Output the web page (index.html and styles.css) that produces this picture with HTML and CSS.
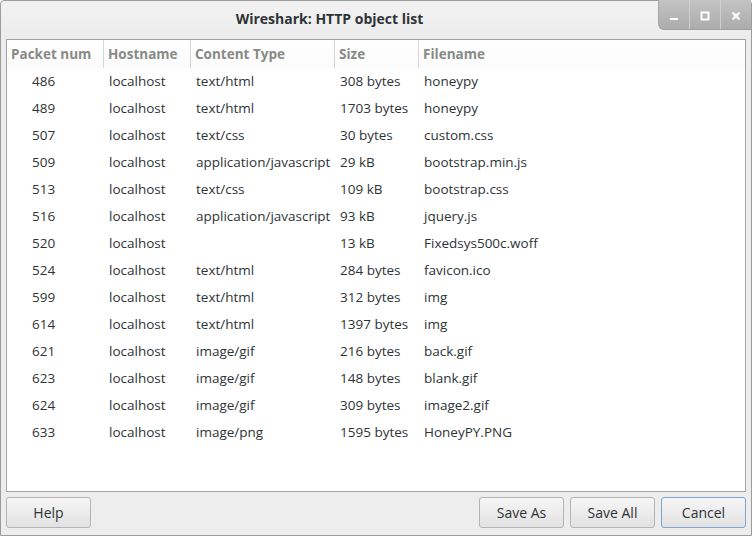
FILE: index.html
```html
<!DOCTYPE html>
<html>
<head>
<meta charset="utf-8">
<link rel="stylesheet" href="styles.css">
</head>
<body>
<div class="window">
  <div class="titlebar">
    <div class="title">Wireshark: HTTP object list</div>
    <div class="wm-buttons">
      <div class="wm-btn"><svg width="10" height="10" viewBox="0 0 10 10"><rect x="1" y="7" width="8" height="2" fill="#fff"/></svg></div>
      <div class="wm-btn"><svg width="10" height="10" viewBox="0 0 10 10"><rect x="1.5" y="1.5" width="7" height="7" fill="none" stroke="#fff" stroke-width="2"/></svg></div>
      <div class="wm-btn"><svg width="10" height="10" viewBox="0 0 10 10"><path d="M1.5 1.5 L8.5 8.5 M8.5 1.5 L1.5 8.5" stroke="#fff" stroke-width="2.2"/></svg></div>
    </div>
  </div>
  <div class="content">
    <div class="tree">
      <div class="row header">
        <div class="c c1">Packet num</div>
        <div class="c c2">Hostname</div>
        <div class="c c3">Content Type</div>
        <div class="c c4">Size</div>
        <div class="c c5">Filename</div>
      </div>
      <div class="row"><div class="c c1 num">486</div><div class="c c2">localhost</div><div class="c c3">text/html</div><div class="c c4">308 bytes</div><div class="c c5">honeypy</div></div>
      <div class="row"><div class="c c1 num">489</div><div class="c c2">localhost</div><div class="c c3">text/html</div><div class="c c4">1703 bytes</div><div class="c c5">honeypy</div></div>
      <div class="row"><div class="c c1 num">507</div><div class="c c2">localhost</div><div class="c c3">text/css</div><div class="c c4">30 bytes</div><div class="c c5">custom.css</div></div>
      <div class="row"><div class="c c1 num">509</div><div class="c c2">localhost</div><div class="c c3">application/javascript</div><div class="c c4">29 kB</div><div class="c c5">bootstrap.min.js</div></div>
      <div class="row"><div class="c c1 num">513</div><div class="c c2">localhost</div><div class="c c3">text/css</div><div class="c c4">109 kB</div><div class="c c5">bootstrap.css</div></div>
      <div class="row"><div class="c c1 num">516</div><div class="c c2">localhost</div><div class="c c3">application/javascript</div><div class="c c4">93 kB</div><div class="c c5">jquery.js</div></div>
      <div class="row"><div class="c c1 num">520</div><div class="c c2">localhost</div><div class="c c3"></div><div class="c c4">13 kB</div><div class="c c5">Fixedsys500c.woff</div></div>
      <div class="row"><div class="c c1 num">524</div><div class="c c2">localhost</div><div class="c c3">text/html</div><div class="c c4">284 bytes</div><div class="c c5">favicon.ico</div></div>
      <div class="row"><div class="c c1 num">599</div><div class="c c2">localhost</div><div class="c c3">text/html</div><div class="c c4">312 bytes</div><div class="c c5">img</div></div>
      <div class="row"><div class="c c1 num">614</div><div class="c c2">localhost</div><div class="c c3">text/html</div><div class="c c4">1397 bytes</div><div class="c c5">img</div></div>
      <div class="row"><div class="c c1 num">621</div><div class="c c2">localhost</div><div class="c c3">image/gif</div><div class="c c4">216 bytes</div><div class="c c5">back.gif</div></div>
      <div class="row"><div class="c c1 num">623</div><div class="c c2">localhost</div><div class="c c3">image/gif</div><div class="c c4">148 bytes</div><div class="c c5">blank.gif</div></div>
      <div class="row"><div class="c c1 num">624</div><div class="c c2">localhost</div><div class="c c3">image/gif</div><div class="c c4">309 bytes</div><div class="c c5">image2.gif</div></div>
      <div class="row"><div class="c c1 num">633</div><div class="c c2">localhost</div><div class="c c3">image/png</div><div class="c c4">1595 bytes</div><div class="c c5">HoneyPY.PNG</div></div>
    </div>
    <div class="buttons">
      <div class="btn">Help</div>
      <div class="spacer"></div>
      <div class="btn">Save As</div>
      <div class="btn">Save All</div>
      <div class="btn focus">Cancel</div>
    </div>
  </div>
</div>
</body>
</html>
```
FILE: styles.css
```css
html, body {
  margin: 0;
  padding: 0;
}
body {
  width: 752px;
  height: 536px;
  overflow: hidden;
  font-family: "Open Sans", "DejaVu Sans", sans-serif;
  font-size: 13.5px;
  color: #2e3436;
}
.window {
  width: 752px;
  height: 536px;
  box-sizing: border-box;
  border: 1px solid #9c9c9c;
  border-radius: 4px 4px 0 0;
  background: #ededed;
  display: flex;
  flex-direction: column;
}
.titlebar {
  height: 33px;
  display: flex;
  align-items: flex-start;
  background: linear-gradient(#f2f2f2, #ededed);
  border-radius: 4px 4px 0 0;
}
.title {
  flex: 1;
  height: 33px;
  line-height: 35px;
  text-align: center;
  font-weight: bold;
  font-size: 14px;
  color: #2e3436;
}
.wm-buttons {
  display: flex;
  height: 30px;
  margin-top: -1px;
  background: linear-gradient(#c4c4c4, #acacac);
  border-radius: 0 0 0 6px;
  border-left: 1px solid #a8a8a8;
  border-bottom: 1px solid #a0a0a0;
  box-sizing: border-box;
}
.wm-btn {
  width: 30px;
  display: flex;
  align-items: center;
  justify-content: center;
  padding-top: 2px;
}
.wm-btn + .wm-btn {
  border-left: 1px solid #cfcfcf;
}
.content {
  flex: 1;
  display: flex;
  flex-direction: column;
  padding: 5px 5px 7px 5px;
  gap: 5px;
}
.tree {
  height: 453px;
  box-sizing: border-box;
  border: 1px solid #a3a3a3;
  background: #fff;
  padding-top: 1px;
}
.row {
  display: flex;
  height: 27px;
  line-height: 27px;
  white-space: nowrap;
}
.c {
  box-sizing: border-box;
  padding-left: 5px;
  overflow: hidden;
}
.c1 { width: 97px; padding-left: 4px; }
.c2 { width: 87px; }
.c3 { width: 144px; }
.c4 { width: 84px; }
.c5 { flex: 1; }
.num { padding-left: 25px; }
.header {
  margin-top: -1px;
  height: 28px;
  line-height: 29px;
}
.header .c {
  color: #888a85;
  font-weight: bold;
  border-right: 1px solid #d6d6d6;
  background: linear-gradient(#ffffff, #fbfbfb);
}
.header .c2, .header .c3, .header .c4, .header .c5 { padding-left: 4px; }
.header .c5 { border-right: none; }
.buttons {
  display: flex;
  gap: 6px;
  height: 31px;
}
.spacer { flex: 1; }
.btn {
  width: 85px;
  box-sizing: border-box;
  border: 1px solid #b4b4b4;
  border-radius: 3px;
  background: linear-gradient(#f6f6f6, #e2e2e2);
  text-align: center;
  line-height: 29px;
  font-size: 14px;
  color: #2e3436;
}
.btn.focus {
  border-color: #82a5cf;
}
```
